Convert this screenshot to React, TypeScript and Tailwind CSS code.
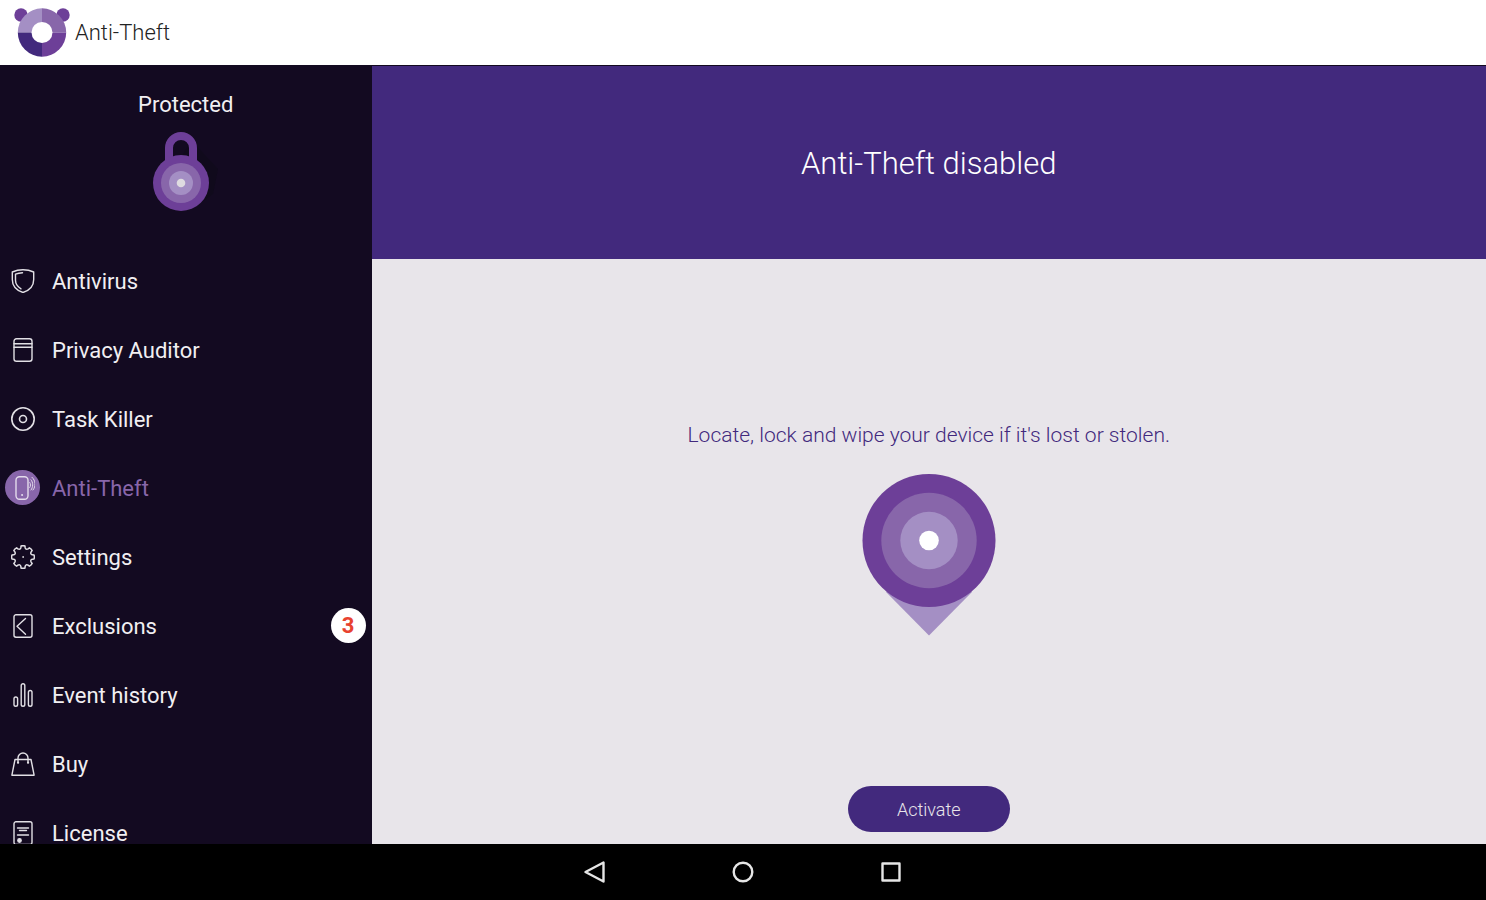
import type { ReactNode } from "react";
import { clsx } from "clsx";

interface MenuItem {
  label: string;
  icon: ReactNode;
  active?: boolean;
  badge?: number;
}

// Outline of an eight-toothed gear centred in a 24x24 box
function gearPath() {
  const point = (radius: number, degrees: number) => {
    const angle = (degrees * Math.PI) / 180;
    return `${(12 + radius * Math.sin(angle)).toFixed(2)} ${(12 - radius * Math.cos(angle)).toFixed(2)}`;
  };
  let d = "";
  for (let i = 0; i < 8; i++) {
    const a = i * 45;
    d += `${i === 0 ? "M" : "L"}${point(9.6, a - 13)} L${point(11.2, a - 10)} `;
    d += `Q${point(11.7, a)} ${point(11.2, a + 10)} L${point(9.6, a + 13)} `;
    d += `Q${point(7.6, a + 22.5)} ${point(9.6, a + 32)} `;
  }
  return `${d}Z`;
}

function MenuIcon({ children }: { children: ReactNode }) {
  return (
    <svg
      viewBox="0 0 24 24"
      className="size-6"
      fill="none"
      stroke="currentColor"
      strokeWidth="1.400"
      strokeLinecap="round"
      strokeLinejoin="round"
      aria-hidden="true"
    >
      {children}
    </svg>
  );
}

const menuItems: MenuItem[] = [
  {
    label: "Antivirus",
    icon: (
      <>
        <path d="M12 .8C8.8 .8 4.500 1.600 1.300 3v7.500C1.300 17 6 21.500 12 23.500 18 21.500 22.700 17 22.700 10.500V3C19.500 1.600 15.200 .8 12 .8Z" />
        <path d="M11.500 3.800C9 3.900 6.300 4.500 4.500 5.200v6c0 4 2.500 6.700 5.500 8.600" />
      </>
    ),
  },
  {
    label: "Privacy Auditor",
    icon: (
      <>
        <rect x="3" y=".8" width="18" height="22.400" rx="2.500" />
        <path d="M3 5.800h18M3 9.300h18" />
      </>
    ),
  },
  {
    label: "Task Killer",
    icon: (
      <>
        <circle cx="12" cy="12" r="11.200" strokeWidth="1.600" />
        <circle cx="12" cy="12" r="3.500" strokeWidth="1.600" />
      </>
    ),
  },
  {
    label: "Anti-Theft",
    active: true,
    icon: (
      <>
        <rect x="5" y=".8" width="12" height="22.400" rx="3.500" />
        <path d="M11 19h.2" strokeWidth="1.800" />
        <path
          d="M18.800 6.500c1 1.300 1 3.700 0 5M20 3.800c2.300 2.500 2.300 7.500 0 10.200M21 1.300c4 3.500 4 9 1 12.700"
          strokeWidth="1"
        />
      </>
    ),
  },
  {
    label: "Settings",
    icon: (
      <>
        <path d={gearPath()} strokeWidth="1.500" />
        <circle cx="12" cy="12" r=".4" strokeWidth="1" />
      </>
    ),
  },
  {
    label: "Exclusions",
    badge: 3,
    icon: (
      <>
        <rect x="3" y=".8" width="18" height="22.400" rx="2" />
        <path d="M14.500 4.500 6 12.300l8.500 8" />
      </>
    ),
  },
  {
    label: "Event history",
    icon: (
      <>
        <rect x="3" y="14" width="3.600" height="9.200" rx="1.800" />
        <rect x="10.200" y=".8" width="3.600" height="22.400" rx="1.800" />
        <rect x="17.400" y="7.500" width="3.600" height="15.700" rx="1.800" />
      </>
    ),
  },
  {
    label: "Buy",
    icon: (
      <>
        <path d="M4 7.500h16L23.100 23.200H.9Z" />
        <path d="M7 10.500V6a5 5 0 0 1 10 0v4.500" />
        <path d="M7 10.700h.1M17 10.700h.1" strokeWidth="2.200" />
      </>
    ),
  },
  {
    label: "License",
    icon: (
      <>
        <rect x="3" y=".8" width="18" height="22.700" rx="2" />
        <path d="M6.500 7h11M8.500 9.500h7M6.500 14h11" />
        <circle cx="8.500" cy="19.500" r="1.700" fill="currentColor" />
      </>
    ),
  },
];

function PandaLogo() {
  return (
    <svg viewBox="0 0 56 50" className="h-[50px] w-14" aria-hidden="true">
      <circle cx="7" cy="7" r="6.700" fill="#6d3f98" />
      <circle cx="49" cy="7" r="6.700" fill="#6d3f98" />
      <path d="M28 24.500H3.800A24.200 24.200 0 0 1 28 .3Z" fill="#a48fc4" />
      <path d="M28 24.500V.3a24.200 24.200 0 0 1 24.200 24.200Z" fill="#8866aa" />
      <path d="M28 24.500h24.200A24.200 24.200 0 0 1 28 48.700Z" fill="#6d3f98" />
      <path d="M28 24.500v24.200A24.200 24.200 0 0 1 3.800 24.500Z" fill="#42297d" />
      <circle cx="28" cy="24.500" r="10.500" fill="#fff" />
    </svg>
  );
}

function Padlock() {
  return (
    <svg viewBox="0 0 65 79" className="h-[79px] w-[65px]" aria-hidden="true">
      <path d="M38 8 65 37 60 62 44 74 20 40Z" fill="#100a1c" />
      <path d="M16 36V16a12 12 0 0 1 24 0v20" fill="none" stroke="#6d3f98" strokeWidth="8" />
      <circle cx="28" cy="51" r="28" fill="#6d3f98" />
      <circle cx="28" cy="51" r="20" fill="#8866aa" />
      <circle cx="28" cy="51" r="12" fill="#a48fc4" />
      <circle cx="28" cy="51" r="4.300" fill="#dedbe0" />
    </svg>
  );
}

function LocationPin() {
  return (
    <svg viewBox="0 0 134 163" className="h-[163px] w-[134px]" aria-hidden="true">
      <path d="M24 119 67 162.500 110 119 67 90Z" fill="#a48fc4" />
      <circle cx="67" cy="67.500" r="66.500" fill="#6d3f98" />
      <circle cx="67" cy="67.500" r="47.700" fill="#8866aa" />
      <circle cx="67" cy="67.500" r="28.700" fill="#a48fc4" />
      <circle cx="67" cy="67.500" r="9.800" fill="#fff" />
    </svg>
  );
}

function Sidebar() {
  return (
    <aside className="flex w-1/4 shrink-0 flex-col overflow-y-auto bg-[#130a21] text-[#f1eff2] [scrollbar-width:none]">
      <div className="flex h-[181px] shrink-0 flex-col items-center gap-3 pt-6">
        <p className="text-[22px] leading-[30px]">Protected</p>
        <Padlock />
      </div>
      <nav aria-label="Main">
        <ul>
          {menuItems.map((item) => (
            <li key={item.label}>
              <a
                href="#"
                aria-current={item.active ? "page" : undefined}
                className={clsx(
                  "flex h-[69px] items-start gap-3 pt-4 pr-[6px] pl-[5px] text-[22px] leading-[38px]",
                  item.active && "text-[#8866aa]"
                )}
              >
                <span
                  className={clsx(
                    "flex size-[35px] shrink-0 items-center justify-center rounded-full",
                    item.active ? "bg-[#8866aa] text-[#e4dcec]" : "text-[#e2e0e5]"
                  )}
                >
                  <MenuIcon>{item.icon}</MenuIcon>
                </span>
                {item.label}
                {item.badge && (
                  <span className="ml-auto flex size-[35px] items-center justify-center rounded-full bg-white font-bold text-[#e8432f]">
                    {item.badge}
                  </span>
                )}
              </a>
            </li>
          ))}
        </ul>
      </nav>
    </aside>
  );
}

function SystemBar() {
  const buttons = [
    { label: "Back", shape: <path d="M20.500 2.500v19L2.500 12Z" /> },
    { label: "Home", shape: <circle cx="12" cy="12" r="9.300" /> },
    { label: "Recent apps", shape: <rect x="3.500" y="3.500" width="17" height="17" /> },
  ];

  return (
    <footer className="flex h-14 shrink-0 justify-center bg-black text-[#e6e6e6]">
      {buttons.map((button) => (
        <button
          key={button.label}
          type="button"
          aria-label={button.label}
          className="flex w-[148px] items-center justify-center"
        >
          <svg
            viewBox="0 0 24 24"
            className="size-6"
            fill="none"
            stroke="currentColor"
            strokeWidth="2.400"
            strokeLinejoin="round"
            aria-hidden="true"
          >
            {button.shape}
          </svg>
        </button>
      ))}
    </footer>
  );
}

export default function App() {
  return (
    <div className="flex h-screen flex-col overflow-hidden bg-white font-[Roboto,sans-serif]">
      <header className="flex h-[66px] shrink-0 items-center gap-[5px] border-b border-[#130a21] px-[14px] text-[22px] font-light text-[#222222]">
        <PandaLogo />
        <span>Anti-Theft</span>
      </header>

      <div className="flex min-h-0 flex-1">
        <Sidebar />
        <main className="flex min-w-0 flex-1 flex-col bg-[#e8e5ea]">
          <div className="flex h-[193px] shrink-0 items-center justify-center bg-[#42297d] pt-1">
            <h1 className="text-[31px] font-light text-white">Anti-Theft disabled</h1>
          </div>
          <section className="flex flex-1 flex-col items-center p-3">
            <div className="flex flex-1 flex-col items-center justify-center gap-6">
              <p className="text-[21px] leading-7 font-light text-[#42297d]">
                Locate, lock and wipe your device if it's lost or stolen.
              </p>
              <LocationPin />
            </div>
            <button
              type="button"
              className="h-[46px] w-[162px] rounded-full bg-[#42297d] text-[18px] font-light text-[#e8e5ea]"
            >
              Activate
            </button>
          </section>
        </main>
      </div>

      <SystemBar />
    </div>
  );
}
